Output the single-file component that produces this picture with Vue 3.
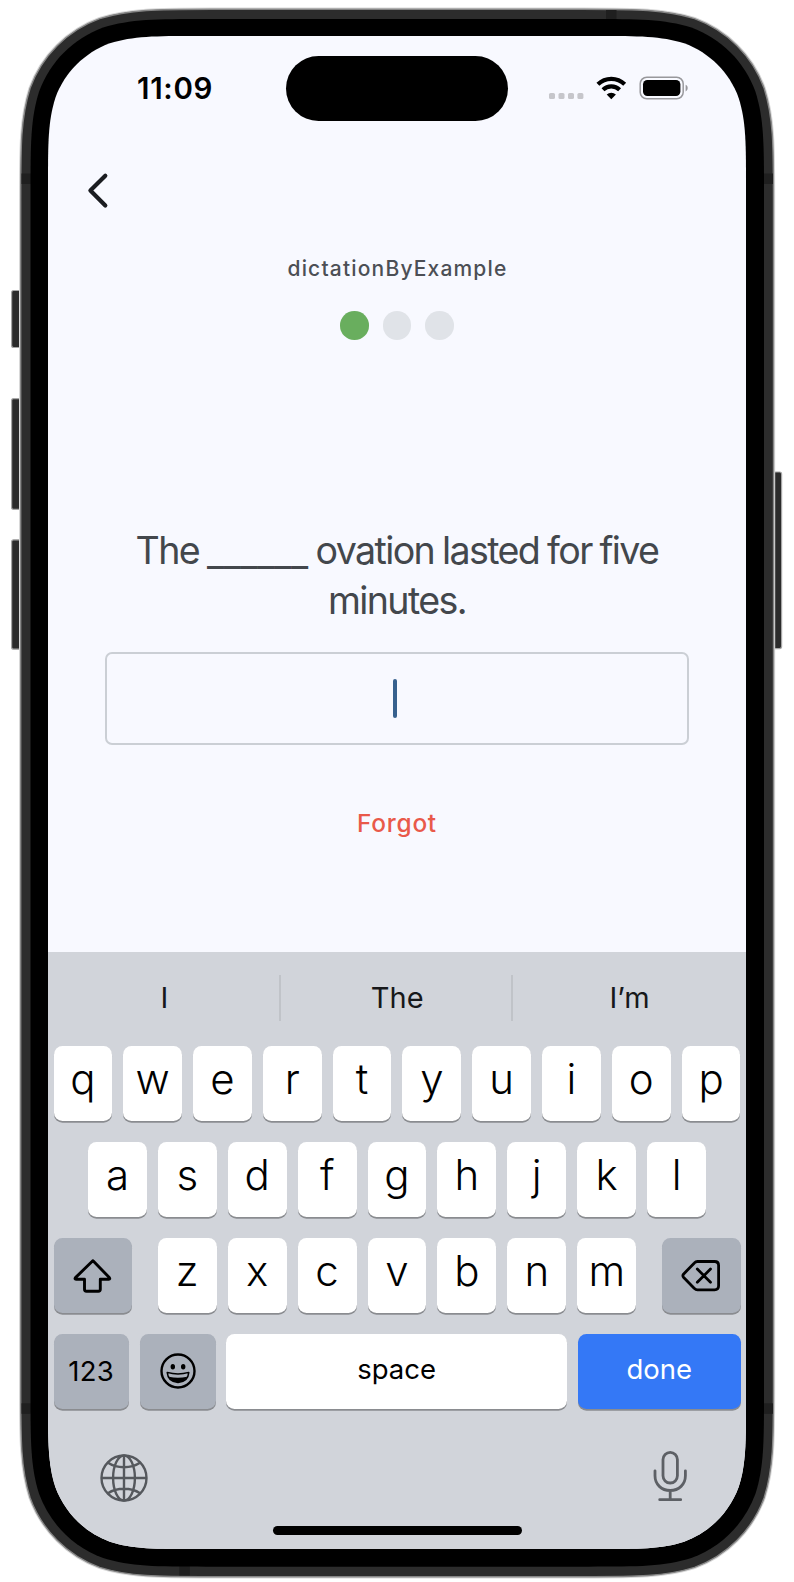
<script setup>
// Continuous-curvature rounded rectangle, as used for the phone's outline.
function squircle(x, y, w, h, r) {
  const k = [1.528665, 1.088493, 0.868407, 0.631494, 0.074911, 0.372824, 0.16906]
  const R = x + w
  const B = y + h
  const [s, a, b, c, d, e, f] = k.map((v) => v * r)
  return [
    `M${x + s} ${y}L${R - s} ${y}`,
    `C${R - a} ${y} ${R - b} ${y} ${R - c} ${y + d}C${R - e} ${y + f} ${R - f} ${y + e} ${R - d} ${y + c}`,
    `C${R} ${y + b} ${R} ${y + a} ${R} ${y + s}L${R} ${B - s}`,
    `C${R} ${B - a} ${R} ${B - b} ${R - d} ${B - c}C${R - f} ${B - e} ${R - e} ${B - f} ${R - c} ${B - d}`,
    `C${R - b} ${B} ${R - a} ${B} ${R - s} ${B}L${x + s} ${B}`,
    `C${x + a} ${B} ${x + b} ${B} ${x + c} ${B - d}C${x + e} ${B - f} ${x + f} ${B - e} ${x + d} ${B - c}`,
    `C${x} ${B - b} ${x} ${B - a} ${x} ${B - s}L${x} ${y + s}`,
    `C${x} ${y + a} ${x} ${y + b} ${x + d} ${y + c}C${x + f} ${y + e} ${x + e} ${y + f} ${x + c} ${y + d}`,
    `C${x + b} ${y} ${x + a} ${y} ${x + s} ${y}Z`,
  ].join('')
}

const body = squircle(20.7, 9.3, 752.8, 1567.4, 125)
const bezel = squircle(30.5, 19, 733.5, 1547.7, 115)
const screenClip = { clipPath: `path("${squircle(0, 0, 698, 1513, 98)}")` }

const suggestions = ['I', 'The', 'I’m']
const row1 = [...'qwertyuiop']
const row2 = [...'asdfghjkl']
const row3 = [...'zxcvbnm']
</script>

<template>
  <div class="stage">
    <svg class="frame" viewBox="0 0 794 1582" width="794" height="1582">
      <g fill="#2b2b2b" stroke="#a6a6a6" stroke-width="1.2">
        <rect x="11.6" y="290.5" width="14" height="57" rx="2" />
        <rect x="11.6" y="398.6" width="14" height="110.8" rx="2" />
        <rect x="11.6" y="539.8" width="14" height="109.4" rx="2" />
        <rect x="768" y="472" width="13.6" height="176.6" rx="2" />
      </g>
      <path :d="body" fill="#2c2c2c" stroke="#d9d9d9" stroke-width="3.4" />
      <path :d="body" fill="#2c2c2c" stroke="#858585" stroke-width="1.4" />
      <g fill="#1f1f1f">
        <rect x="21.5" y="173.5" width="10" height="10.5" />
        <rect x="763" y="173.5" width="10" height="10.5" />
        <rect x="21.5" y="1403.3" width="10" height="10.5" />
        <rect x="763" y="1403.3" width="10" height="10.5" />
        <rect x="606" y="10" width="10.5" height="10" />
        <rect x="179.3" y="1565.5" width="10.5" height="10" />
      </g>
      <path :d="bezel" fill="#000" />
    </svg>

    <main class="screen" :style="screenClip">
      <header class="status">
        <span class="time">11:09</span>
        <span class="island"></span>
        <svg class="indicators" viewBox="0 0 142 28" width="142" height="28">
          <g fill="#c6c6cb">
            <rect x="2" y="19" width="6" height="6" rx="1.6" />
            <rect x="11.5" y="19" width="6" height="6" rx="1.6" />
            <rect x="21" y="19" width="6" height="6" rx="1.6" />
            <rect x="30.4" y="19" width="6" height="6" rx="1.6" />
          </g>
          <g fill="none" stroke="#000">
            <path d="M50.900 10.200a19.300 19.300 0 0 1 26.800 0" stroke-width="4.200" />
            <path d="M56 15.800a12 12 0 0 1 16.600 0" stroke-width="4.200" />
          </g>
          <path d="M64.300 25.200l-4.600-4.700a6.700 6.700 0 0 1 9.200 0z" fill="#000" />
          <rect x="93.200" y="3.200" width="43" height="21.600" rx="6.600" fill="none" stroke="#98989c" stroke-width="1.500" />
          <rect x="96" y="6" width="37.400" height="16" rx="4.400" fill="#000" />
          <path d="M138.600 10.800c2.800 1 2.800 5.400 0 6.600z" fill="#98989c" />
        </svg>
      </header>

      <nav class="nav">
        <svg viewBox="0 0 24 38" width="24" height="38">
          <path d="M19.300 4.800 4.400 19.600l14.900 14.800" fill="none" stroke="#1b1d21" stroke-width="4.200" stroke-linecap="round" stroke-linejoin="round" />
        </svg>
      </nav>

      <section class="quiz">
        <h1 class="title">dictationByExample</h1>
        <div class="dots"><i class="on"></i><i></i><i></i></div>
        <p class="question">The <span class="blank">______</span> ovation lasted for five<br />minutes.</p>
        <div class="field"><span class="caret"></span></div>
        <button class="forgot" type="button">Forgot</button>
      </section>

      <section class="keyboard">
        <div class="suggest">
          <span v-for="s in suggestions" :key="s">{{ s }}</span>
        </div>
        <div class="row"><kbd v-for="k in row1" :key="k" class="key">{{ k }}</kbd></div>
        <div class="row inset"><kbd v-for="k in row2" :key="k" class="key">{{ k }}</kbd></div>
        <div class="row split">
          <kbd class="key mod">
            <svg viewBox="0 0 40 36" width="40" height="36">
              <path d="M19.300 3.200 2.500 19.600q-1.200 1.600.6 1.700h8.400v9.900q0 2 2 2h11.800q2 0 2-2v-9.900h8.400q1.800-.1.600-1.700L20.500 3.200q-.6-.6-1.200 0z" fill="none" stroke="#000" stroke-width="2.900" stroke-linejoin="round" />
            </svg>
          </kbd>
          <div class="letters"><kbd v-for="k in row3" :key="k" class="key">{{ k }}</kbd></div>
          <kbd class="key mod">
            <svg viewBox="0 0 40 34" width="40" height="34">
              <path d="M16.500 2.500h17.100q4 0 4 4v20.300q0 4-4 4H16.500q-1.800 0-3.100-1.400L2.700 18.500q-1.600-1.800 0-3.600L13.400 3.900q1.300-1.400 3.100-1.400zM16.300 10.100l13.200 13.200m0-13.200-13.200 13.200" fill="none" stroke="#000" stroke-width="2.800" stroke-linecap="round" stroke-linejoin="round" />
            </svg>
          </kbd>
        </div>
        <div class="row bottom">
          <kbd class="key mod num">123</kbd>
          <kbd class="key mod emoji">
            <svg viewBox="0 0 36 36" width="36" height="36">
              <circle cx="18" cy="18" r="16.500" fill="none" stroke="#000" stroke-width="2.400" />
              <ellipse cx="12.800" cy="13.700" rx="2.200" ry="2.700" />
              <ellipse cx="23.200" cy="13.700" rx="2.200" ry="2.700" />
              <path d="M7.200 19.400q10.800 3 21.600 0-.7 9.400-10.800 10-10-.6-10.800-10z" fill="none" stroke="#000" stroke-width="1.500" stroke-linejoin="round" />
              <path d="M8.800 23.800q9.200 2 18.400 0-2.700 5.200-9.200 5.600-6.500-.4-9.200-5.600z" />
            </svg>
          </kbd>
          <kbd class="key space">space</kbd>
          <kbd class="key done">done</kbd>
        </div>
        <footer class="tools">
          <svg class="globe" viewBox="0 0 50 50" width="50" height="50" fill="none" stroke="#55585d" stroke-width="2.400">
            <circle cx="25" cy="25" r="22.500" />
            <ellipse cx="25" cy="25" rx="10.900" ry="22.500" />
            <path d="M25 2.500v45M2.500 25h45M9 9.800c8.800 5.900 23.200 5.900 32 0M9 40.200c8.800-5.900 23.200-5.900 32 0" />
          </svg>
          <svg viewBox="0 0 36 52" width="36" height="52" fill="none" stroke="#5d6065" stroke-width="2.800" stroke-linecap="round">
            <rect x="11" y="2.400" width="14.400" height="30.600" rx="7.200" />
            <path d="M3 20.800v5c0 8.600 6.500 14.700 15.200 14.700s15.200-6.100 15.200-14.700v-5M18.200 40.500v9M7.700 49.700h21" />
          </svg>
        </footer>
        <div class="home"></div>
      </section>
    </main>
  </div>
</template>

<style>
body {
  margin: 0;
  background: #fff;
}
</style>

<style scoped>
.stage {
  position: relative;
  box-sizing: border-box;
  width: 794px;
  height: 1582px;
  padding: 36px 48px 33px;
  overflow: hidden;
  font-family: Inter, "Liberation Sans", sans-serif;
}
.frame {
  position: absolute;
  inset: 0;
}
.screen {
  position: relative;
  display: flex;
  flex-direction: column;
  width: 698px;
  height: 1513px;
  background: #f8f9ff;
}
.status {
  display: grid;
  grid-template-columns: 238px 222px 238px;
  height: 112px;
  padding-top: 20px;
  box-sizing: border-box;
}
.time {
  padding-left: 89px;
  font-size: 29.5px;
  font-weight: 600;
  line-height: 36px;
  margin-top: 14px;
  letter-spacing: 0.7px;
}
.island {
  height: 65.4px;
  border-radius: 33px;
  background: #000;
}
.indicators {
  margin: 18px 0 0 39px;
}
.nav {
  height: 92px;
  padding: 23px 0 0 37.5px;
  box-sizing: border-box;
}
.nav svg,
.indicators {
  display: block;
}
.quiz {
  display: flex;
  flex-direction: column;
  align-items: center;
  flex: 1;
}
.title {
  margin: 14px 0 0;
  padding-left: 1px;
  font-size: 21px;
  font-weight: 450;
  line-height: 30px;
  letter-spacing: 1.18px;
  color: #4c4f55;
}
.dots {
  display: flex;
  gap: 14px;
  margin-top: 27px;
}
.dots i {
  width: 28.6px;
  height: 28.6px;
  border-radius: 50%;
  background: #e0e3e8;
}
.dots .on {
  background: #69ae5e;
}
.question {
  margin: 186px 0 0;
  font-size: 37.6px;
  line-height: 50px;
  letter-spacing: -1.6px;
  word-spacing: -1.2px;
  text-align: center;
  white-space: nowrap;
  color: #43474c;
}
.blank {
  letter-spacing: -0.35px;
  vertical-align: -2px;
  line-height: 1;
}
.field {
  display: flex;
  align-items: center;
  justify-content: center;
  box-sizing: border-box;
  width: 584px;
  height: 93px;
  margin-top: 26px;
  border: 2px solid #cbcfd5;
  border-radius: 7px;
}
.caret {
  width: 3.6px;
  height: 39px;
  margin-right: 4px;
  border-radius: 2px;
  background: #37618e;
}
.forgot {
  margin-top: 61px;
  padding: 0;
  border: 0;
  background: none;
  font: 450 24.4px/34px Inter, sans-serif;
  letter-spacing: 0.75px;
  color: #e9594a;
}
.keyboard {
  display: flex;
  flex-direction: column;
  box-sizing: border-box;
  height: 597px;
  padding: 0 5.5px;
  background: #d1d4da;
}
.suggest {
  display: grid;
  grid-template-columns: 225px 232.5px 1fr;
  margin: 23px 0 27px;
  height: 44px;
}
.suggest span {
  line-height: 46px;
  font-size: 29px;
  text-align: center;
  padding-left: 3px;
  color: #17181a;
}
.suggest span:first-child {
  padding: 0 3px 0 0;
}
.suggest span + span {
  border-left: 2px solid #c0c3c8;
}
.suggest span:last-child {
  padding-left: 5.5px;
}
.row {
  display: flex;
  gap: 11px;
  height: 75px;
  margin-bottom: 21px;
}
.inset {
  padding: 0 34.5px;
}
.key {
  flex: 1 1 0;
  display: flex;
  align-items: center;
  justify-content: center;
  box-sizing: border-box;
  height: 75px;
  padding-bottom: 11px;
  border-radius: 8.5px;
  background: #fff;
  box-shadow: 0 1.7px 0 #8a8c90;
  font-family: Inter, sans-serif;
  font-size: 42px;
  font-weight: 350;
  color: #000;
}
.split {
  justify-content: space-between;
}
.split > .mod {
  flex: 0 0 78.5px;
  padding-bottom: 0;
}
.letters {
  display: flex;
  gap: 11px;
  width: 478.7px;
}
.key.mod {
  background: #abb1bb;
}
.bottom .key {
  flex: none;
  font-size: 27.5px;
  font-weight: 400;
  padding-bottom: 5px;
}
.bottom .key.num {
  width: 75.4px;
  padding-bottom: 1px;
  letter-spacing: 0.3px;
}
.bottom .key.emoji {
  width: 76.5px;
  padding-bottom: 1px;
}
.bottom .key.space {
  width: 340.5px;
  margin-left: -1px;
}
.bottom .key.done {
  flex: 1;
  background: #3478f6;
  color: #fff;
}
.tools {
  display: flex;
  justify-content: space-between;
  align-items: flex-start;
  padding: 20px 52.5px 0 45px;
}
.globe {
  margin-top: 2.5px;
}
.home {
  width: 249px;
  height: 9px;
  margin: 23px auto 0;
  border-radius: 5px;
  background: #000;
}
</style>
